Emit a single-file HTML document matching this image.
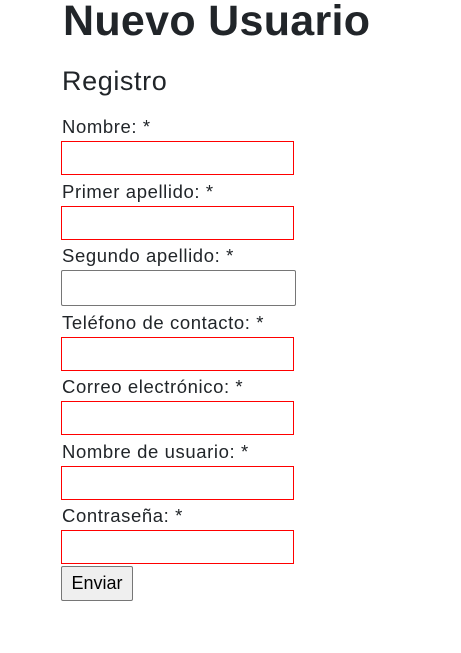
<!DOCTYPE html>
<html><head><style>
body{margin:0;background:#fff;font-family:"Liberation Sans",sans-serif;color:#212529;}
h1{position:absolute;left:63px;top:-6px;margin:0;font-size:43px;font-weight:bold;line-height:54px;letter-spacing:0.3px}
h2{position:absolute;left:62px;top:64px;margin:0;font-size:27px;font-weight:normal;line-height:34px;letter-spacing:0.6px}
.l{position:absolute;left:62px;font-size:18.5px;line-height:22px;letter-spacing:0.6px;white-space:nowrap}
.i{position:absolute;left:61px;width:231px;height:32px;border:1px solid #f00;box-sizing:content-box}
.g{border:1px solid #767676;border-radius:2px;width:233px;height:34px}
.b{position:absolute;left:61px;top:566px;width:70px;height:33px;border:1px solid #767676;border-radius:2px;background:#efefef;font-size:18px;line-height:33px;text-align:center;color:#000}
</style></head><body>
<h1>Nuevo Usuario</h1>
<h2>Registro</h2>
<div class="l" style="top:116px">Nombre: *</div><div class="i" style="top:141px"></div>
<div class="l" style="top:181px">Primer apellido: *</div><div class="i" style="top:206px"></div>
<div class="l" style="top:245px">Segundo apellido: *</div><div class="i g" style="top:270px"></div>
<div class="l" style="top:312px">Teléfono de contacto: *</div><div class="i" style="top:337px"></div>
<div class="l" style="top:376px">Correo electrónico: *</div><div class="i" style="top:401px"></div>
<div class="l" style="top:441px">Nombre de usuario: *</div><div class="i" style="top:466px"></div>
<div class="l" style="top:505px">Contraseña: *</div><div class="i" style="top:530px"></div>
<div class="b">Enviar</div>
</body></html>
